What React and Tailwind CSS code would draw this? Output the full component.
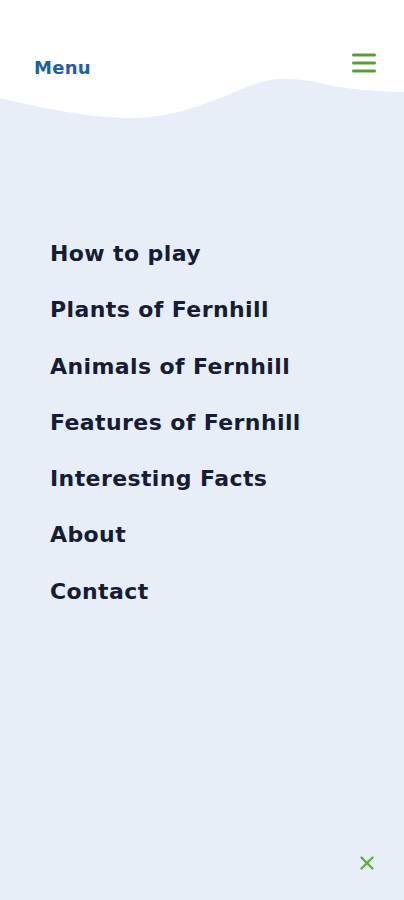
import React from 'react';
import { X } from 'lucide-react';

const links = [
  'How to play',
  'Plants of Fernhill',
  'Animals of Fernhill',
  'Features of Fernhill',
  'Interesting Facts',
  'About',
  'Contact',
];

const App = () => {
  return (
    <div
      className="w-[404px] h-[900px] bg-[#e7eef8] flex flex-col overflow-hidden"
      style={{ fontFamily: '"DejaVu Sans", "Noto Sans", sans-serif' }}
    >
      <header className="relative z-10 bg-white h-[70px] flex items-start justify-between pl-[34px] pr-[28px] pt-[55px]">
        <span className="text-[#1f5ea6] text-[18px] font-bold leading-[26px] tracking-[0.3px]">Menu</span>
        <button className="text-[#5a9b3a] -mt-[3px]">
          <svg width="24" height="22" viewBox="0 0 24 22" className="block">
            <path d="M1.5 3h21M1.5 11h21M1.5 19h21" stroke="currentColor" strokeWidth="3" strokeLinecap="round" fill="none" />
          </svg>
        </button>
      </header>
      <svg viewBox="0 0 404 50" className="w-[404px] h-[50px] block shrink-0" preserveAspectRatio="none">
        <rect x="0" y="0" width="404" height="50" fill="#e7eef8" />
        <path
          d="M0 0 L0 28 C40 38 90 48 130 48 C170 48 200 36 230 24 C255 14 265 9 285 9 C310 9 320 14 345 18 C370 21 390 22 404 22 L404 0 Z"
          fill="#ffffff"
        />
      </svg>
      <nav className="flex flex-col gap-[31.3px] pl-[50px] pt-[121px]">
        {links.map(l => (
          <a key={l} className="text-[#161c36] text-[22px] font-bold leading-[25px] tracking-[0.4px]">
            {l}
          </a>
        ))}
      </nav>
      <div className="mt-auto flex justify-end pr-[26px] pb-[26px]">
        <X size={22} strokeWidth={2.6} className="text-[#5fae3f]" />
      </div>
    </div>
  );
};

export default App;
